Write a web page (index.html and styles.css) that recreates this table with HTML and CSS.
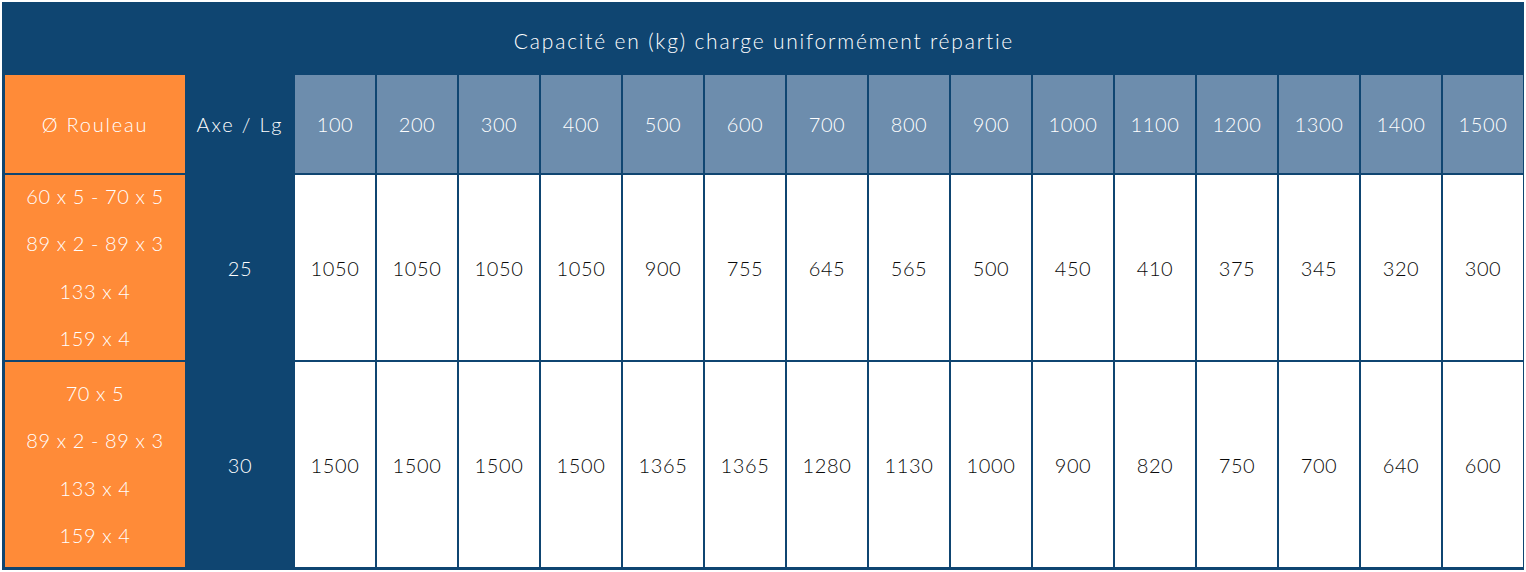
FILE: index.html
```html
<!DOCTYPE html>
<html lang="fr">
<head>
<meta charset="utf-8">
<title>Capacité</title>
<link rel="stylesheet" href="styles.css">
</head>
<body>
<div class="grid">
  <div class="title">Capacité en (kg) charge uniformément répartie</div>

  <div class="cell orange label">Ø Rouleau</div>
  <div class="cell axe label">Axe / Lg</div>
  <div class="cell head">100</div>
  <div class="cell head">200</div>
  <div class="cell head">300</div>
  <div class="cell head">400</div>
  <div class="cell head">500</div>
  <div class="cell head">600</div>
  <div class="cell head">700</div>
  <div class="cell head">800</div>
  <div class="cell head">900</div>
  <div class="cell head">1000</div>
  <div class="cell head">1100</div>
  <div class="cell head">1200</div>
  <div class="cell head">1300</div>
  <div class="cell head">1400</div>
  <div class="cell head">1500</div>

  <div class="cell orange lines"><span>60 x 5 - 70 x 5</span><span>89 x 2 - 89 x 3</span><span>133 x 4</span><span>159 x 4</span></div>
  <div class="cell axe">25</div>
  <div class="cell data">1050</div>
  <div class="cell data">1050</div>
  <div class="cell data">1050</div>
  <div class="cell data">1050</div>
  <div class="cell data">900</div>
  <div class="cell data">755</div>
  <div class="cell data">645</div>
  <div class="cell data">565</div>
  <div class="cell data">500</div>
  <div class="cell data">450</div>
  <div class="cell data">410</div>
  <div class="cell data">375</div>
  <div class="cell data">345</div>
  <div class="cell data">320</div>
  <div class="cell data">300</div>

  <div class="cell orange lines"><span>70 x 5</span><span>89 x 2 - 89 x 3</span><span>133 x 4</span><span>159 x 4</span></div>
  <div class="cell axe">30</div>
  <div class="cell data">1500</div>
  <div class="cell data">1500</div>
  <div class="cell data">1500</div>
  <div class="cell data">1500</div>
  <div class="cell data">1365</div>
  <div class="cell data">1365</div>
  <div class="cell data">1280</div>
  <div class="cell data">1130</div>
  <div class="cell data">1000</div>
  <div class="cell data">900</div>
  <div class="cell data">820</div>
  <div class="cell data">750</div>
  <div class="cell data">700</div>
  <div class="cell data">640</div>
  <div class="cell data">600</div>
</div>
</body>
</html>
```

FILE: styles.css
```css
html, body {
  margin: 0;
  padding: 0;
  background: #ffffff;
}
body {
  padding: 2px 0 0 2px;
  font-family: Lato, "Open Sans", sans-serif;
  font-weight: 300;
}
.grid {
  box-sizing: border-box;
  width: 1522px;
  height: 568px;
  background: #0f4571;
  display: grid;
  grid-template-columns: 180px 106px repeat(15, 80px);
  grid-template-rows: 71px 98px 185px 205px;
  gap: 2px;
  padding: 0 1px 3px 3px;
}
.title {
  grid-column: 1 / -1;
  display: flex;
  align-items: center;
  justify-content: center;
  color: #ffffff;
  font-size: 21px;
  letter-spacing: 1.8px;
  padding-top: 6px;
}
.cell {
  display: flex;
  align-items: center;
  justify-content: center;
  font-size: 20px;
  text-align: center;
  letter-spacing: 0.6px;
}
.cell.label {
  letter-spacing: 1.8px;
}
.orange {
  background: #ff8b38;
  color: #ffffff;
}
.lines {
  flex-direction: column;
}
.lines span {
  display: block;
  line-height: 47.5px;
}
.axe {
  color: #ffffff;
}
.head {
  background: #6d8dad;
  color: #ffffff;
}
.data {
  background: #ffffff;
  color: #0a0a0a;
}
```
